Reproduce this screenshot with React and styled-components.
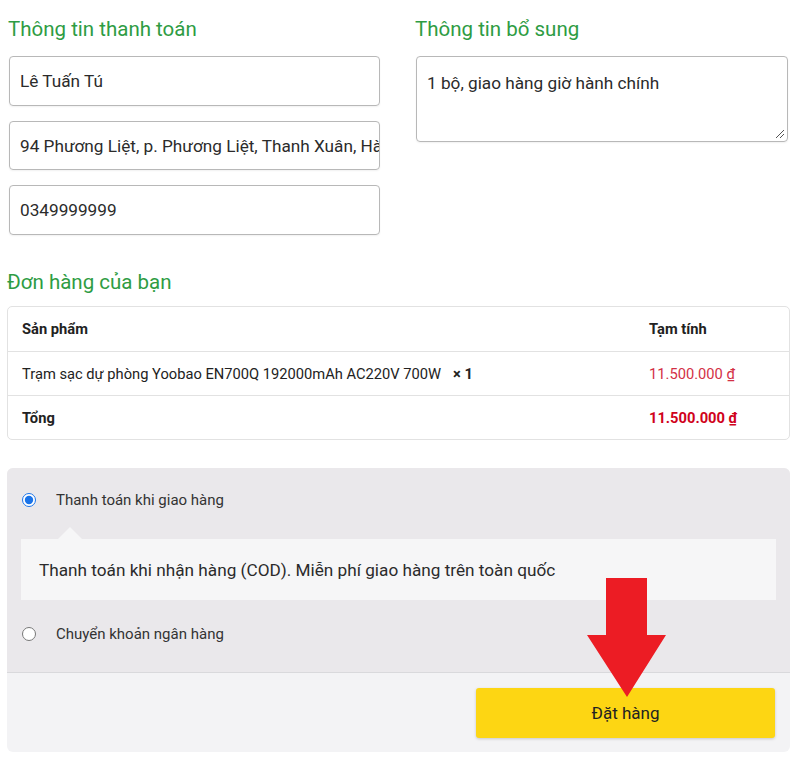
import styled, { createGlobalStyle } from "styled-components";

const GlobalStyle = createGlobalStyle`
  html, body {
    margin: 0;
    padding: 0;
    background: #fff;
    font-family: Roboto, "Noto Sans", "Liberation Sans", sans-serif;
    color: #333;
  }
  * { box-sizing: border-box; }
`;

const Page = styled.div`
  width: 800px;
  padding: 17px 10px 8px 7px;
`;

const TopGrid = styled.div`
  display: grid;
  grid-template-columns: 372px 373px;
  column-gap: 35px;
  padding-left: 1px;
`;

const Column = styled.div`
  display: flex;
  flex-direction: column;
  gap: 15px;
`;

const Heading = styled.h3`
  margin: 0;
  font-size: 20.5px;
  line-height: 24px;
  font-weight: 400;
  color: #2e9c43;
`;

const Field = styled.div`
  height: ${(p) => p.$h || 50}px;
  margin-left: 1px;
  border: 1.5px solid #b8b8b8;
  border-radius: 4px;
  padding: ${(p) => (p.$area ? "15px 10px" : "0 10px")};
  display: flex;
  align-items: ${(p) => (p.$area ? "flex-start" : "center")};
  font-size: 17.2px;
  line-height: 22px;
  color: #2b2b2b;
  white-space: nowrap;
  overflow: hidden;
  position: relative;
  box-shadow: 0 1px 2px rgba(0, 0, 0, 0.06);
`;

const Grip = styled.svg`
  position: absolute;
  right: 2px;
  bottom: 2px;
`;

const OrderSection = styled.div`
  margin-top: 35px;
  display: flex;
  flex-direction: column;
  gap: 12px;
`;

const Table = styled.div`
  border: 1px solid #e2e2e2;
  border-radius: 5px;
  overflow: hidden;
`;

const Row = styled.div`
  display: grid;
  grid-template-columns: 1fr 154px;
  height: ${(p) => p.$h || 44}px;
  align-items: center;
  font-size: 14.7px;
  color: #222;
  font-weight: ${(p) => (p.$bold ? 700 : 400)};
  & + & {
    border-top: 1px solid #e2e2e2;
  }
`;

const Cell = styled.div`
  padding-left: 14px;
  white-space: nowrap;
`;

const Price = styled.span`
  color: ${(p) => (p.$strong ? "#d0021b" : "#d32f45")};
  font-weight: ${(p) => (p.$strong ? 700 : 400)};
`;

const Qty = styled.strong`
  margin-left: 12px;
`;

const PaymentBox = styled.div`
  margin-top: 28px;
  border-radius: 6px;
  overflow: hidden;
  background: #f3f3f5;
  position: relative;
  height: 284px;
  display: flex;
  flex-direction: column;
`;

const Methods = styled.div`
  background: #eae8eb;
  border-bottom: 1px solid #d9d9dc;
  padding: 22px 14px 0 14px;
  height: 205px;
`;

const MethodRow = styled.label`
  display: flex;
  align-items: center;
  gap: 20px;
  height: 20px;
  padding-left: 1px;
  font-size: 15px;
  color: #333;
`;

const Radio = styled.input`
  margin: 0;
  width: 14px;
  height: 14px;
  accent-color: #1a73e8;
`;

const Desc = styled.div`
  position: relative;
  margin: 29px 0 24px;
  background: #f6f6f7;
  height: 61px;
  padding-left: 18px;
  display: flex;
  align-items: center;
  font-size: 17.2px;
  color: #2b2b2b;
  &::before {
    content: "";
    position: absolute;
    left: 37px;
    top: -12px;
    border-left: 12px solid transparent;
    border-right: 12px solid transparent;
    border-bottom: 12px solid #f6f6f7;
  }
`;

const Footer = styled.div`
  flex: 1;
  display: flex;
  justify-content: flex-end;
  align-items: flex-start;
  padding: 15px 15px 0 0;
`;

const OrderButton = styled.button`
  width: 299px;
  height: 50px;
  border: none;
  border-radius: 3px;
  background: #fdd613;
  font-family: inherit;
  font-size: 17px;
  color: #222;
  box-shadow: 0 1px 3px rgba(0, 0, 0, 0.18);
`;

const Arrow = styled.svg`
  position: absolute;
  left: 580px;
  top: 110px;
`;

export default function App() {
  return (
    <>
      <GlobalStyle />
      <Page>
        <TopGrid>
          <Column>
            <Heading>Thông tin thanh toán</Heading>
            <Field>Lê Tuấn Tú</Field>
            <Field $h={49}>94 Phương Liệt, p. Phương Liệt, Thanh Xuân, Hà Nội</Field>
            <Field>0349999999</Field>
          </Column>
          <Column>
            <Heading>Thông tin bổ sung</Heading>
            <Field $area $h={86}>
              1 bộ, giao hàng giờ hành chính
              <Grip width="12" height="12" viewBox="0 0 12 12">
                <path d="M11 3 L3 11 M11 7 L7 11" stroke="#555" strokeWidth="1" />
              </Grip>
            </Field>
          </Column>
        </TopGrid>

        <OrderSection>
          <Heading>Đơn hàng của bạn</Heading>
          <Table>
            <Row $bold $h={44}>
              <Cell>Sản phẩm</Cell>
              <Cell>Tạm tính</Cell>
            </Row>
            <Row>
              <Cell>
                Trạm sạc dự phòng Yoobao EN700Q 192000mAh AC220V 700W<Qty>× 1</Qty>
              </Cell>
              <Cell>
                <Price>11.500.000 ₫</Price>
              </Cell>
            </Row>
            <Row $bold>
              <Cell>Tổng</Cell>
              <Cell>
                <Price $strong>11.500.000 ₫</Price>
              </Cell>
            </Row>
          </Table>
        </OrderSection>

        <PaymentBox>
          <Methods>
            <MethodRow>
              <Radio type="radio" name="pay" defaultChecked />
              Thanh toán khi giao hàng
            </MethodRow>
            <Desc>Thanh toán khi nhận hàng (COD). Miễn phí giao hàng trên toàn quốc</Desc>
            <MethodRow>
              <Radio type="radio" name="pay" />
              Chuyển khoản ngân hàng
            </MethodRow>
          </Methods>
          <Footer>
            <OrderButton>Đặt hàng</OrderButton>
          </Footer>
          <Arrow width="80" height="120" viewBox="0 0 80 120">
            <path d="M19 0 H60 V57 H79 L40 119 L0 57 H19 Z" fill="#ec1c24" />
          </Arrow>
        </PaymentBox>
      </Page>
    </>
  );
}
